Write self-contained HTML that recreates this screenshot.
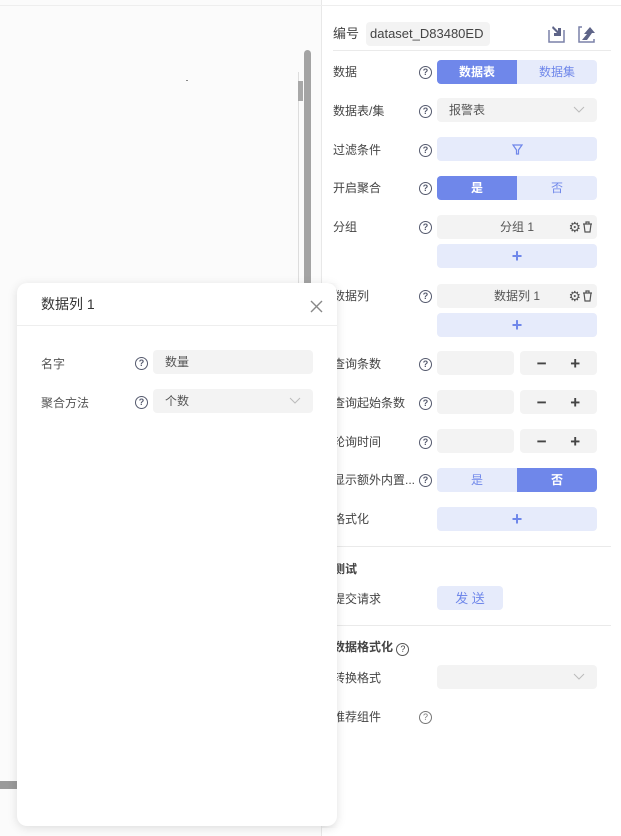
<!DOCTYPE html>
<html><head><meta charset="utf-8"><style>
*{box-sizing:border-box;margin:0;padding:0}
body{width:621px;height:836px;overflow:hidden;background:#fff;font-family:"Liberation Sans","Noto Sans CJK SC",sans-serif;font-size:12px;color:#555;position:relative}
.canvas{position:absolute;left:0;top:0;width:322px;height:836px;background:#fbfbfb;border-right:1px solid #e8e8e8}
.topline{position:absolute;left:0;top:5px;width:621px;height:1px;background:#eee}
.abs{position:absolute}
.lbl{position:absolute;left:333px;font-size:12px;color:#444;line-height:16px}
.q{position:absolute;left:419px;width:13px;height:13px;border:1.5px solid #555a6e;border-radius:50%;font-size:9px;line-height:10px;text-align:center;color:#555a6e;font-weight:bold}
.ctl{position:absolute;left:437px;width:160px;height:24px;border-radius:4px;font-size:12px;line-height:25px;text-align:center}
.g{background:#f3f3f3;color:#555}
.lb{background:#e6ebfb;color:#6f87ea}
.on{background:#6f87ea;color:#fff}
.half{position:absolute;top:0;width:80px;height:24px}
.plus{font-size:18px;color:#6f87ea;font-weight:bold}
.sec{position:absolute;left:333px;font-weight:bold;color:#444;font-size:12px}
.hr{position:absolute;left:333px;width:278px;height:1px;background:#eaeaea}
.ic{position:absolute;right:4px;top:0;font-size:14px;color:#555}
</style></head><body>
<div class="canvas"></div>
<div class="topline"></div>
<div class="abs" style="left:186px;top:80px;width:2px;height:1px;background:#888"></div>
<div class="abs" style="left:298px;top:72px;width:1px;height:700px;background:#ddd"></div>
<div class="abs" style="left:298px;top:81px;width:5px;height:20px;background:#a8a8a8"></div>
<div class="abs" style="left:304px;top:50px;width:7px;height:740px;background:#a4a4a4;border-radius:4px"></div>
<div class="abs" style="left:0;top:781px;width:20px;height:8px;background:#9a9a9a"></div>

<div class="lbl" style="top:26px;font-size:13px">编号</div>
<div class="abs" style="left:366px;top:22px;width:124px;height:24px;background:#f3f3f3;border-radius:4px;font-size:13px;line-height:24px;padding-left:4px;color:#444">dataset_D83480ED</div>
<svg class="abs" style="left:547px;top:24px" width="20" height="20" viewBox="0 0 20 20"><path d="M2 6v12h15V6" fill="none" stroke="#7a81a8" stroke-width="1.5"/><path d="M6 2l5 5V4l3 0v8H7l0-3h3L5 4z" fill="#5e6488"/></svg>
<svg class="abs" style="left:577px;top:24px" width="20" height="20" viewBox="0 0 20 20"><path d="M5 3H2v15h15v-3" fill="none" stroke="#7a81a8" stroke-width="1.5"/><path d="M5 16l5-6H7l6-7 5 6h-3l-5 7z" fill="#5e6488"/></svg>
<div class="hr" style="top:50px"></div>

<div class="lbl" style="top:64px">数据</div><div class="q" style="top:66px">?</div>
<div class="ctl lb" style="top:60px"><div class="half on" style="left:0;border-radius:4px 0 0 4px;font-weight:bold">数据表</div><div class="half" style="left:80px">数据集</div></div>

<div class="lbl" style="top:103px">数据表/集</div><div class="q" style="top:105px">?</div>
<div class="ctl g" style="top:98px;text-align:left;padding-left:12px">报警表<svg class="abs" style="right:12px;top:8px" width="12" height="8"><path d="M1 1l5 5 5-5" fill="none" stroke="#bbb"/></svg></div>

<div class="lbl" style="top:142px">过滤条件</div><div class="q" style="top:144px">?</div>
<div class="ctl lb" style="top:137px"><svg class="abs" style="left:75px;top:7px" width="11" height="11"><path d="M1 1h9L6.5 6v4h-2V6z" fill="none" stroke="#6f87ea" stroke-width="1.2"/></svg></div>

<div class="lbl" style="top:180px">开启聚合</div><div class="q" style="top:182px">?</div>
<div class="ctl lb" style="top:176px"><div class="half on" style="left:0;border-radius:4px 0 0 4px;font-weight:bold">是</div><div class="half" style="left:80px">否</div></div>

<div class="lbl" style="top:219px">分组</div><div class="q" style="top:221px">?</div>
<div class="ctl g" style="top:215px">分组 1<span class="ic">⚙<svg width="11" height="12" style="vertical-align:-1px;margin-left:1px"><path d="M1 3h9M4 3V1h3v2M2 3l1 8h5l1-8" fill="none" stroke="#555" stroke-width="1.2"/></svg></span></div>
<div class="ctl lb plus" style="top:244px">+</div>

<div class="lbl" style="top:288px">数据列</div><div class="q" style="top:290px">?</div>
<div class="ctl g" style="top:284px">数据列 1<span class="ic">⚙<svg width="11" height="12" style="vertical-align:-1px;margin-left:1px"><path d="M1 3h9M4 3V1h3v2M2 3l1 8h5l1-8" fill="none" stroke="#555" stroke-width="1.2"/></svg></span></div>
<div class="ctl lb plus" style="top:313px">+</div>

<div class="lbl" style="top:356px">查询条数</div><div class="q" style="top:358px">?</div>
<div class="ctl g" style="top:351px;width:77px"></div><div class="ctl g" style="top:351px;left:520px;width:77px;font-size:17px;font-weight:bold;color:#444">−&nbsp;&nbsp;&nbsp;&nbsp;&nbsp;+</div>
<div class="lbl" style="top:395px">查询起始条数</div><div class="q" style="top:397px">?</div>
<div class="ctl g" style="top:390px;width:77px"></div><div class="ctl g" style="top:390px;left:520px;width:77px;font-size:17px;font-weight:bold;color:#444">−&nbsp;&nbsp;&nbsp;&nbsp;&nbsp;+</div>
<div class="lbl" style="top:434px">轮询时间</div><div class="q" style="top:436px">?</div>
<div class="ctl g" style="top:429px;width:77px"></div><div class="ctl g" style="top:429px;left:520px;width:77px;font-size:17px;font-weight:bold;color:#444">−&nbsp;&nbsp;&nbsp;&nbsp;&nbsp;+</div>

<div class="lbl" style="top:472px">显示额外内置...</div><div class="q" style="top:474px">?</div>
<div class="ctl lb" style="top:468px"><div class="half" style="left:0">是</div><div class="half on" style="left:80px;border-radius:0 4px 4px 0;font-weight:bold">否</div></div>

<div class="lbl" style="top:511px">格式化</div>
<div class="ctl lb plus" style="top:507px">+</div>
<div class="hr" style="top:546px"></div>
<div class="sec" style="top:560px">测试</div>
<div class="lbl" style="top:591px">提交请求</div>
<div class="ctl lb" style="top:586px;width:66px;font-size:13px">发 送</div>
<div class="hr" style="top:625px"></div>
<div class="sec" style="top:638px">数据格式化 <span style="display:inline-block;width:13px;height:13px;border:1.2px solid #555;border-radius:50%;font-size:9px;line-height:11px;text-align:center;font-weight:normal;vertical-align:-1px">?</span></div>
<div class="lbl" style="top:670px">转换格式</div>
<div class="ctl g" style="top:665px"><svg class="abs" style="right:12px;top:8px" width="12" height="8"><path d="M1 1l5 5 5-5" fill="none" stroke="#bbb"/></svg></div>
<div class="lbl" style="top:709px">推荐组件</div>
<div class="q" style="top:711px;border-width:1px;border-color:#777;color:#777;font-weight:normal">?</div>

<div class="abs" style="left:322px;top:283px;width:16px;height:545px;background:linear-gradient(to right,rgba(240,240,240,.9),rgba(255,255,255,0))"></div>

<div class="abs" style="left:17px;top:283px;width:320px;height:543px;background:#fff;border-radius:10px;box-shadow:0 2px 10px rgba(0,0,0,.12)">
<div class="abs" style="left:24px;top:12px;font-size:14px;color:#333;line-height:18px">数据列 1</div>
<svg class="abs" style="left:293px;top:17px" width="13" height="13"><path d="M1 1l11 11M12 1L1 12" stroke="#888" stroke-width="1.4"/></svg>
<div class="abs" style="left:0;top:42px;width:320px;height:1px;background:#eee"></div>
<div class="abs" style="left:24px;top:72px;color:#555">名字</div>
<div class="abs" style="left:118px;top:74px;width:13px;height:13px;border:1.5px solid #555a6e;border-radius:50%;font-size:9px;line-height:10px;text-align:center;color:#555a6e;font-weight:bold">?</div>
<div class="abs" style="left:136px;top:67px;width:160px;height:24px;background:#f3f3f3;border-radius:4px;line-height:25px;padding-left:12px;color:#555">数量</div>
<div class="abs" style="left:24px;top:111px;color:#555">聚合方法</div>
<div class="abs" style="left:118px;top:113px;width:13px;height:13px;border:1.5px solid #555a6e;border-radius:50%;font-size:9px;line-height:10px;text-align:center;color:#555a6e;font-weight:bold">?</div>
<div class="abs" style="left:136px;top:106px;width:160px;height:24px;background:#f3f3f3;border-radius:4px;line-height:25px;padding-left:12px;color:#555">个数<svg class="abs" style="right:12px;top:8px" width="12" height="8"><path d="M1 1l5 5 5-5" fill="none" stroke="#bbb"/></svg></div>
</div>
</body></html>
